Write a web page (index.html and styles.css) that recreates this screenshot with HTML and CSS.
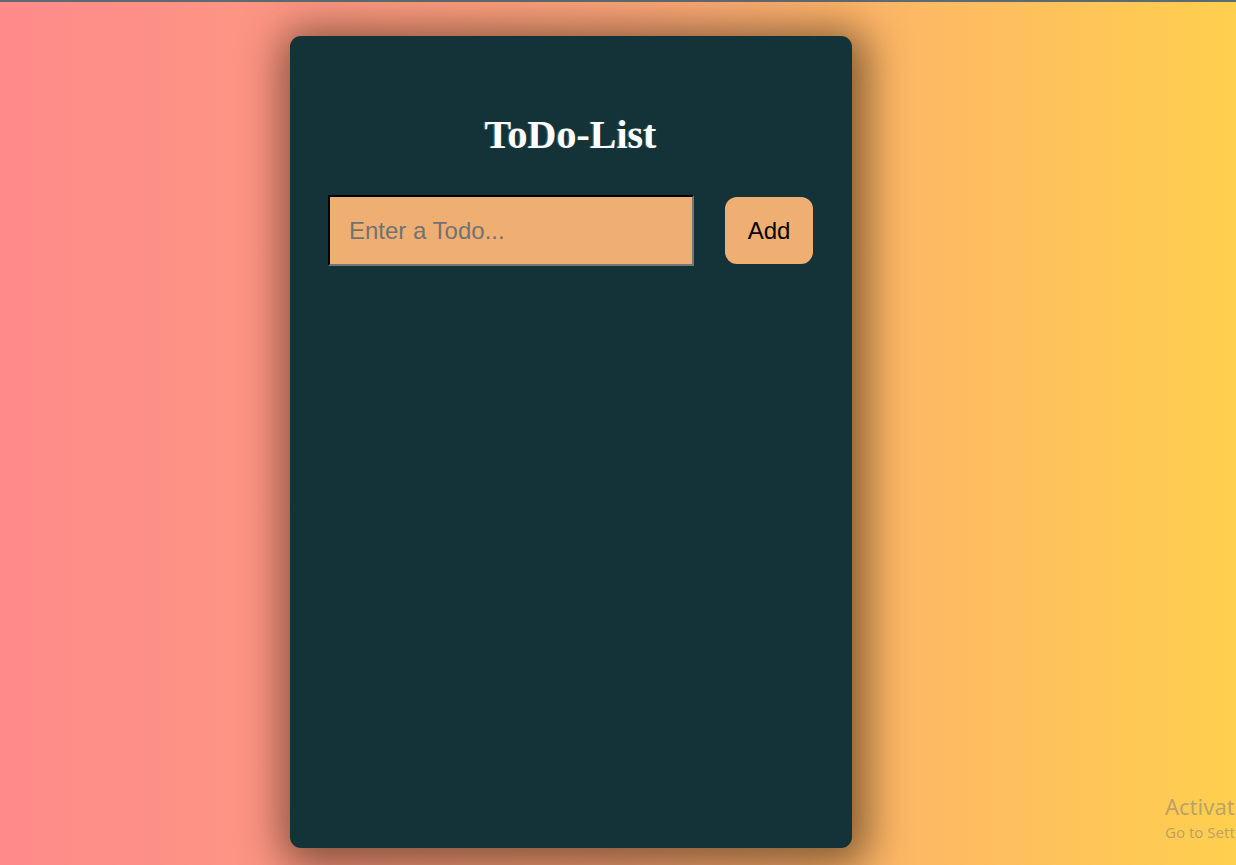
FILE: index.html
```html
<!DOCTYPE html>
<html lang="en">
<head>
<meta charset="utf-8">
<title>ToDo-List</title>
<link rel="stylesheet" href="styles.css">
</head>
<body>
<div class="topline"></div>
<main class="page">
  <section class="card">
    <h1 class="title">ToDo-List</h1>
    <form class="entry" onsubmit="return false">
      <input class="todo-input" type="text" placeholder="Enter a Todo...">
      <button class="add-btn" type="button">Add</button>
    </form>
    <ul class="todo-list"></ul>
  </section>
</main>
<div class="watermark">
  <div class="wm-title">Activate Windows</div>
  <div class="wm-sub">Go to Settings to activate Windows.</div>
</div>
</body>
</html>
```

FILE: styles.css
```css
html, body {
  margin: 0;
  padding: 0;
  height: 100%;
  overflow: hidden;
}
body {
  background: linear-gradient(to right, #fe8a8a 0%, #fba47a 50%, #ffcf4e 100%);
  font-family: "Liberation Sans", Arial, sans-serif;
  position: relative;
}
.topline {
  height: 2px;
  background: #5f6a70;
}
.page {
  padding: 34px 0 0 290px;
}
.card {
  box-sizing: border-box;
  width: 562px;
  height: 812px;
  background: #133339;
  border-radius: 11px;
  box-shadow: 4px 6px 40px 12px rgba(55, 35, 15, 0.6);
  padding: 0 39px 0 38px;
  display: flex;
  flex-direction: column;
}
.title {
  margin: 76px 0 0;
  font-family: "Liberation Serif", "Times New Roman", serif;
  font-weight: bold;
  font-size: 40px;
  line-height: 46px;
  color: #ffffff;
  text-align: center;
  text-shadow: -1px 0 1px rgba(150, 220, 255, 0.35);
}
.entry {
  margin: 37px 0 0;
  display: flex;
  align-items: center;
  gap: 31px;
}
.todo-input {
  box-sizing: border-box;
  width: 366px;
  height: 71px;
  background: #f0af72;
  border: 2px inset #767676;
  border-top-color: #1f1f1f;
  border-left-color: #1f1f1f;
  padding: 0 19px;
  font-family: "Liberation Sans", Arial, sans-serif;
  font-size: 24px;
  color: #000;
  outline: none;
}
.todo-input::placeholder {
  color: #727272;
}
.add-btn {
  box-sizing: border-box;
  width: 88px;
  height: 67px;
  background: #f0af72;
  border: none;
  border-radius: 12px;
  font-family: "Liberation Sans", Arial, sans-serif;
  font-size: 24px;
  color: #000;
  padding: 0;
}
.todo-list {
  margin: 0;
  padding: 0;
  list-style: none;
}
.watermark {
  position: absolute;
  left: 1165px;
  top: 791px;
  white-space: nowrap;
  color: rgba(120, 120, 120, 0.5);
  font-family: "Noto Sans", "Liberation Sans", sans-serif;
}
.wm-title {
  font-size: 22px;
  line-height: 30px;
}
.wm-sub {
  font-size: 15px;
  line-height: 22px;
}
```
